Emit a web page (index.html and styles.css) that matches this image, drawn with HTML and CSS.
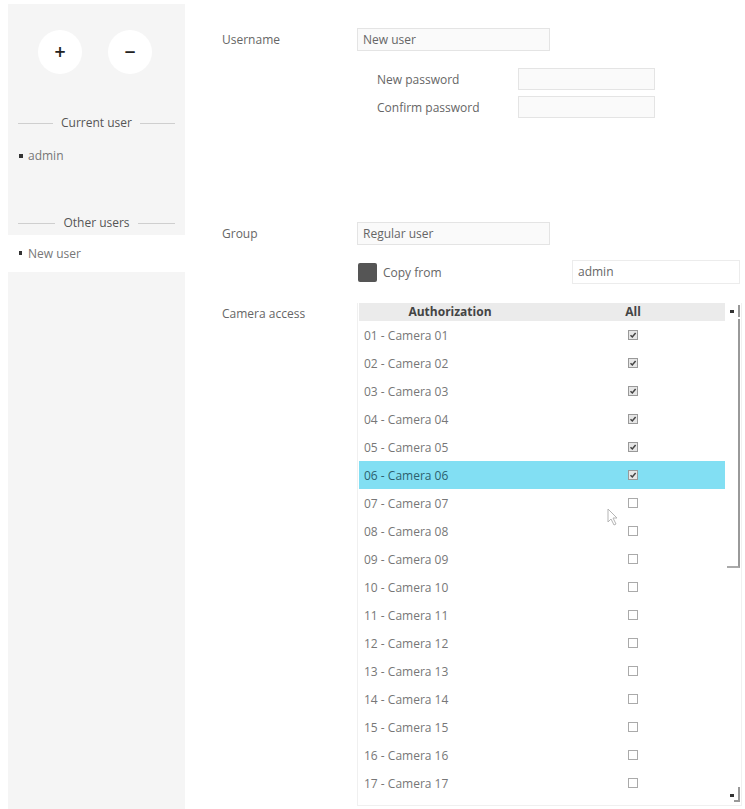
FILE: index.html
```html
<!DOCTYPE html>
<html lang="en">
<head>
<meta charset="UTF-8">
<title>User settings</title>
<link rel="stylesheet" href="styles.css">
</head>
<body>
<div class="page">
  <aside class="sidebar">
    <div class="panel">
      <div class="user-buttons">
        <button class="round-btn">+</button>
        <button class="round-btn">&minus;</button>
      </div>
      <div class="divider">Current user</div>
      <div class="user-item">admin</div>
      <div class="divider other">Other users</div>
    </div>
    <div class="user-item selected">New user</div>
    <div class="panel fill"></div>
  </aside>

  <main class="form">
    <div class="row">
      <label>Username</label>
      <div class="field wide">New user</div>
    </div>
    <div class="passwords">
      <div class="sub-row">
        <label>New password</label>
        <div class="field small"></div>
      </div>
      <div class="sub-row">
        <label>Confirm password</label>
        <div class="field small"></div>
      </div>
    </div>
    <div class="row group-row">
      <label>Group</label>
      <div class="field wide">Regular user</div>
    </div>
    <div class="row copy-row">
      <span></span>
      <div class="copy">
        <span class="copy-box"></span>
        <span class="copy-label">Copy from</span>
        <div class="field copy-field">admin</div>
      </div>
    </div>
    <div class="row access-row">
      <label>Camera access</label>
      <div class="cam-table">
        <div class="cam-list">
          <div class="cam-head">
            <span>Authorization</span>
            <span>All</span>
          </div>
          <div id="cam-rows"></div>
        </div>
        <div class="scroll">
          <span class="arrow"></span>
          <span class="thumb"></span>
          <span class="track"></span>
          <span class="arrow down"></span>
        </div>
      </div>
    </div>
    <svg class="pointer" width="12" height="18" viewBox="0 0 12 18">
      <path d="M1 1 L1 14 L4 11 L7 17 L9 16 L6 10 L10 10 Z" fill="#fff" stroke="#b5b5b5" stroke-width="1"/>
    </svg>
  </main>
</div>

<script>
const cameraCount = 17;
const checkedUpTo = 6;   // cameras 1..6 have access
const selectedCam = 6;

function pad(n) {
  return n < 10 ? '0' + n : '' + n;
}

function buildRows() {
  const holder = document.getElementById('cam-rows');
  for (let i = 1; i <= cameraCount; i++) {
    const row = document.createElement('div');
    row.className = 'cam-row' + (i === selectedCam ? ' active' : '');
    const name = document.createElement('span');
    name.className = 'cam-name';
    name.textContent = `${pad(i)} - Camera ${pad(i)}`;
    const cell = document.createElement('span');
    cell.className = 'cam-check';
    const box = document.createElement('span');
    box.className = 'check' + (i <= checkedUpTo ? ' on' : '');
    if (i <= checkedUpTo) {
      box.innerHTML = '<svg width="8" height="8" viewBox="0 0 8 8"><path d="M1.5 4.2 L3.3 6 L6.6 2" fill="none" stroke="#444" stroke-width="1.5"/></svg>';
    }
    cell.appendChild(box);
    row.appendChild(name);
    row.appendChild(cell);
    holder.appendChild(row);
  }
}

buildRows();
</script>
</body>
</html>
```

FILE: styles.css
```css
body {
  margin: 0;
  background: #fff;
  font-family: "Open Sans", Arial, sans-serif;
  font-size: 12px;
  color: #666;
}
.page {
  display: flex;
  height: 809px;
  overflow: hidden;
}

/* Sidebar */
.sidebar {
  width: 177px;
  margin-left: 8px;
  display: flex;
  flex-direction: column;
}
.panel {
  background-color: #f5f5f5;
  margin-top: 4px;
  height: 231px;
  box-sizing: border-box;
  padding-top: 26px;
}
.panel.fill {
  flex: 1;
  height: auto;
  margin-top: 2px;
  padding: 0;
}
.user-buttons {
  display: flex;
  justify-content: center;
  gap: 26px;
  padding-right: 3px;
}
.round-btn {
  width: 44px;
  height: 44px;
  border-radius: 50%;
  border: none;
  background: #fff;
  font-family: "DejaVu Sans", sans-serif;
  font-size: 15px;
  font-weight: bold;
  color: #222;
  padding: 0;
}
.divider {
  display: flex;
  align-items: center;
  gap: 8px;
  margin: 41px 10px 0 10px;
  color: #555;
  line-height: 16px;
}
.divider::before,
.divider::after {
  content: "";
  flex: 1;
  border-top: 1px solid #cfcfcf;
}
.divider.other {
  margin-top: 51px;
}
.user-item {
  position: relative;
  padding-left: 20px;
  margin-top: 17px;
  line-height: 16px;
  color: #777;
}
.user-item::before {
  content: "";
  position: absolute;
  left: 11px;
  top: 6px;
  width: 4px;
  height: 4px;
  background: #333;
}
.user-item.selected {
  margin-top: 2px;
  background: #fff;
  height: 33px;
  line-height: 33px;
}
.user-item.selected::before {
  top: 14px;
  width: 3px;
}

/* Form */
.form {
  position: relative;
  flex: 1;
  padding: 28px 0 0 37px;
}
.row {
  display: grid;
  grid-template-columns: 135px 1fr;
  align-items: center;
}
.field {
  box-sizing: border-box;
  height: 23px;
  line-height: 21px;
  border: 1px solid #e4e4e4;
  background: #fafafa;
  padding-left: 5px;
  color: #666;
}
.field.wide {
  width: 193px;
}
.passwords {
  margin: 17px 0 0 155px;
  display: flex;
  flex-direction: column;
  gap: 6px;
}
.sub-row {
  display: grid;
  grid-template-columns: 141px 137px;
  align-items: center;
}
.field.small {
  height: 22px;
}
.group-row {
  margin-top: 104px;
}
.copy-row {
  margin-top: 15px;
}
.copy {
  display: flex;
  align-items: center;
}
.copy-box {
  width: 19px;
  height: 19px;
  background: #555;
  border-radius: 2px;
  margin-left: 1px;
}
.copy-label {
  margin-left: 6px;
  width: 189px;
}
.field.copy-field {
  width: 168px;
  height: 24px;
  background: #fff;
  border-color: #ececec;
}
.access-row {
  margin-top: 19px;
  align-items: start;
}
.access-row label {
  margin-top: 2px;
}

/* Camera table */
.cam-table {
  width: 385px;
  height: 503px;
  display: flex;
  border: 1px solid #f0f0f0;
  border-top: none;
  box-sizing: border-box;
}
.cam-list {
  width: 367px;
  overflow: hidden;
  margin-left: 1px;
}
.cam-head {
  display: grid;
  grid-template-columns: 182px 1fr;
  height: 18px;
  line-height: 18px;
  background: #ebebeb;
  font-weight: bold;
  color: #444;
  text-align: center;
}
.cam-row {
  display: grid;
  grid-template-columns: 182px 1fr;
  height: 28px;
  align-items: center;
  color: #777;
}
.cam-row.active {
  background: #82dff3;
  color: #2d5f6e;
}
.cam-name {
  padding-left: 5px;
}
.cam-check {
  display: flex;
  justify-content: center;
}
.check {
  box-sizing: border-box;
  width: 10px;
  height: 10px;
  border: 1px solid #aaa;
  background: #fff;
  display: flex;
  align-items: center;
  justify-content: center;
}
.check.on {
  background: #e6e6e6;
  border-color: #999;
}

/* Scrollbar */
.scroll {
  width: 16px;
  display: flex;
  flex-direction: column;
  align-items: flex-end;
}
.arrow {
  height: 16px;
  width: 16px;
  position: relative;
  flex-shrink: 0;
}
.arrow::before {
  content: "";
  position: absolute;
  left: 5px;
  top: 7px;
  width: 4px;
  height: 3px;
  background: #333;
}
.arrow::after {
  content: "";
  position: absolute;
  right: 1px;
  top: 2px;
  height: 12px;
  border-right: 2px solid #999;
}
.arrow.down {
  height: 20px;
}
.arrow.down::before {
  top: 9px;
}
.arrow.down::after {
  top: 2px;
  height: 13px;
  width: 4px;
  border-bottom: 2px solid #999;
}
.thumb {
  width: 13px;
  height: 249px;
  border-right: 2px solid #999;
  border-bottom: 2px solid #aaa;
  box-sizing: border-box;
  margin-right: 1px;
}
.track {
  flex: 1;
}

/* mouse pointer resting over the list */
.pointer {
  position: absolute;
  left: 422px;
  top: 508px;
}
```
